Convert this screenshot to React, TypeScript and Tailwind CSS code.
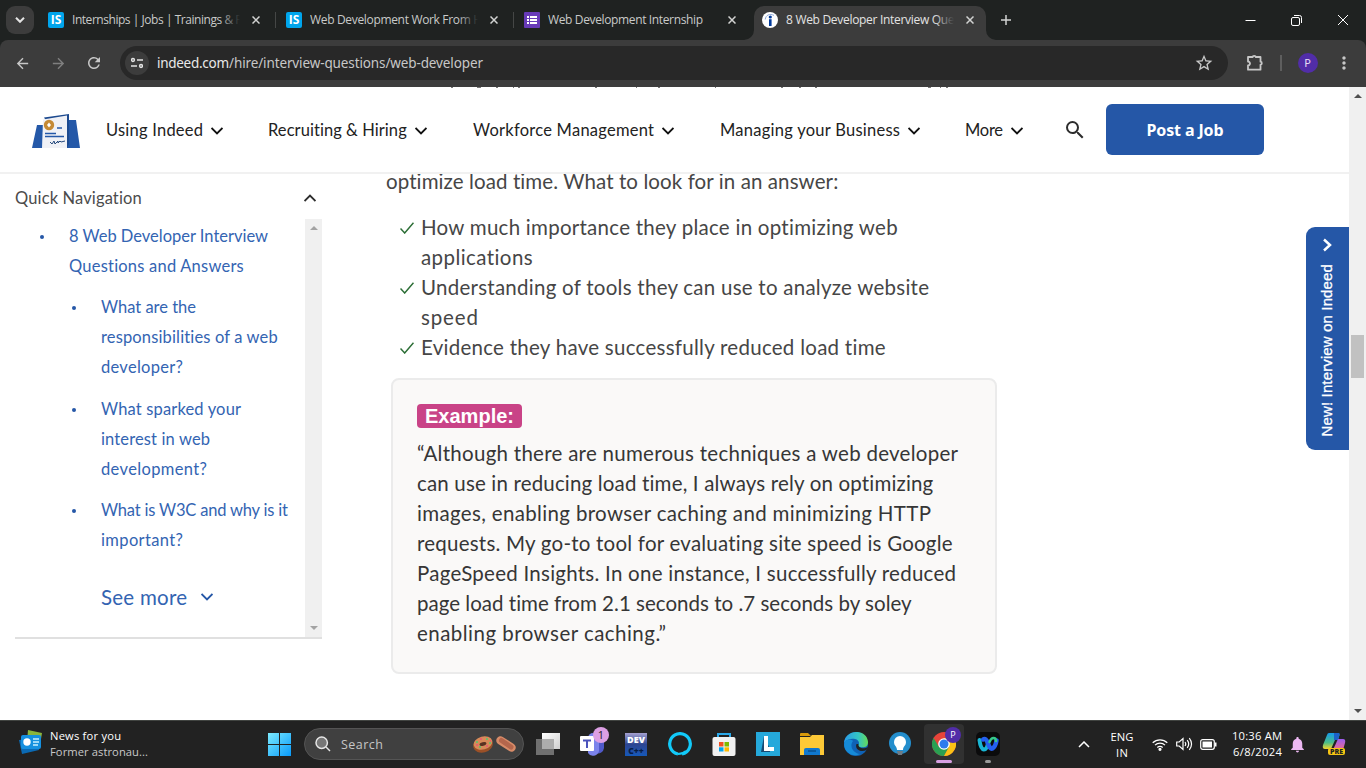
import React, { useLayoutEffect, useRef, useState } from "react";
import {
  MdArrowBack,
  MdArrowForward,
  MdRefresh,
  MdStarBorder,
  MdMoreVert,
  MdSearch,
  MdNotifications,
} from "react-icons/md";

/* Single line of text tracked so that it fills the given width. */
function Fit({ w, children, className = "" }: { w: number; children: string; className?: string }) {
  const ref = useRef<HTMLSpanElement>(null);
  const [spacing, setSpacing] = useState(0);
  useLayoutEffect(() => {
    if (ref.current) {
      const natural = ref.current.getBoundingClientRect().width;
      setSpacing((w - natural) / Math.max(1, children.length - 1));
    }
  }, []);
  return (
    <span className={`block shrink-0 whitespace-nowrap ${className}`} style={{ width: w }}>
      <span ref={ref} style={{ letterSpacing: spacing }}>
        {children}
      </span>
    </span>
  );
}

function Chevron({ up = false, className = "" }: { up?: boolean; className?: string }) {
  return (
    <svg viewBox="0 0 12 8" className={`h-2 w-3 shrink-0 ${className}`} fill="none" stroke="currentColor" strokeWidth="1.9">
      <path d={up ? "M.5 7 6 1.5l5.5 5.5" : "M.5 1l5.5 5.5L11.5 1"} />
    </svg>
  );
}

function Cross({ className = "" }: { className?: string }) {
  return (
    <svg viewBox="0 0 8 8" className={`size-2 shrink-0 ${className}`} stroke="#d2d3d2" strokeWidth="1.5">
      <path d="M.5.5l7 7M7.5.5l-7 7" />
    </svg>
  );
}

function IsLogo() {
  return (
    <span className="flex size-4 shrink-0 items-center justify-center rounded-[2px] bg-[#00a5ec] font-['Open_Sans',sans-serif] text-[12px] leading-none font-bold text-white">
      IS
    </span>
  );
}

function Tab({ icon, title, w, fade }: { icon: React.ReactNode; title: string; w: number; fade: boolean }) {
  return (
    <div className="flex h-full w-[238px] items-center pl-2">
      {icon}
      <div className="relative ml-2 w-[168px] overflow-hidden">
        <Fit w={w}>{title}</Fit>
        {fade && <div className="absolute inset-y-0 right-0 w-5 bg-linear-to-r from-transparent to-[#1f2221]" />}
      </div>
      <Cross className="ml-3" />
    </div>
  );
}

function TabStrip() {
  return (
    <div className="flex h-10 shrink-0 bg-[#1f2221] font-['Open_Sans',sans-serif] text-[12px] text-[#c9cac9]">
      <div className="mt-1.5 ml-1.5 flex size-7 items-center justify-center rounded-[9px] bg-[#3c3c3c]">
        <svg viewBox="0 0 10 6" className="h-1.5 w-2.5" fill="none" stroke="#e3e3e3" strokeWidth="2">
          <path d="M1 .8l4 4 4-4" />
        </svg>
      </div>
      <div className="ml-1.5 flex">
        <Tab icon={<IsLogo />} title="Internships | Jobs | Trainings & Fr" w={174} fade />
        <div className="-ml-[3px] mr-0.5 mt-3 h-4 w-px bg-[#454746]" />
        <Tab icon={<IsLogo />} title="Web Development Work From Ho" w={179} fade />
        <div className="-ml-[3px] mr-0.5 mt-3 h-4 w-px bg-[#454746]" />
        <Tab
          icon={
            <svg viewBox="0 0 16 16" className="size-4 shrink-0">
              <rect width="16" height="16" rx="1" fill="#673ab7" />
              <path d="M3 4h2v2H3zM6 4h7v2H6zM3 7h2v2H3zM6 7h7v2H6zM3 10h2v2H3zM6 10h7v2H6z" fill="#fff" />
            </svg>
          }
          title="Web Development Internship"
          w={155}
          fade={false}
        />
      </div>
      <div className="relative mt-1.5 flex h-[34px] w-[232px] items-center rounded-t-[10px] bg-[#3c3c3c] pb-1.5 pl-2 text-[#e3e3e3]">
        <svg viewBox="0 0 10 10" className="absolute bottom-0 -left-2.5 size-2.5">
          <path d="M10 0v10H0A10 10 0 0 0 10 0" fill="#3c3c3c" />
        </svg>
        <svg viewBox="0 0 10 10" className="absolute -right-2.5 bottom-0 size-2.5">
          <path d="M0 0v10h10A10 10 0 0 1 0 0" fill="#3c3c3c" />
        </svg>
        <svg viewBox="0 0 16 16" className="size-4 shrink-0">
          <circle cx="8" cy="8" r="8" fill="#fff" />
          <circle cx="8.3" cy="5" r="1.6" fill="#003a9b" />
          <path d="M7 7.2h2.6V14H7z" fill="#003a9b" />
          <path d="M3.2 7.5C3.8 3 7.6 1.2 12 3.4" fill="none" stroke="#8fa8d8" strokeWidth="1" />
        </svg>
        <div className="relative ml-2 w-[168px] overflow-hidden">
          <Fit w={174}>8 Web Developer Interview Ques</Fit>
          <div className="absolute inset-y-0 right-0 w-5 bg-linear-to-r from-transparent to-[#3c3c3c]" />
        </div>
        <Cross className="ml-3" />
      </div>
      <svg viewBox="0 0 10 10" className="mt-[15px] ml-[15px] size-2.5" stroke="#d2d3d2" strokeWidth="1.5">
        <path d="M5 0v10M0 5h10" />
      </svg>
      <div className="ml-auto flex items-center gap-[35px] pr-[17px] text-white">
        <svg viewBox="0 0 11 11" className="size-[11px]" stroke="currentColor">
          <path d="M.5 5.5h10" />
        </svg>
        <svg viewBox="0 0 11 11" className="size-[11px]" fill="none" stroke="currentColor">
          <rect x=".5" y="2.5" width="8" height="8" rx="1.5" />
          <path d="M3 .5h5.5a2 2 0 0 1 2 2V8" />
        </svg>
        <svg viewBox="0 0 12 12" className="size-3" stroke="currentColor">
          <path d="M1 1l10 10M11 1 1 11" />
        </svg>
      </div>
    </div>
  );
}

function Toolbar() {
  return (
    <div className="h-[47px] shrink-0 bg-[#1f2221]">
      <div className="flex h-full items-center rounded-t-lg bg-[#3c3c3c] pb-px text-[#c7c7c7]">
        <MdArrowBack className="ml-3.5 size-[17px]" />
        <MdArrowForward className="ml-[19px] size-[17px] text-[#7f7f7f]" />
        <MdRefresh className="ml-[18px] size-[18px]" />
        <div className="ml-[17px] flex h-[34px] w-[1108px] items-center rounded-full bg-[#282828] pl-[5px]">
          <div className="flex size-6 items-center justify-center rounded-full bg-[#3c3c3c]">
            <svg viewBox="0 0 12 12" className="size-3" fill="none" stroke="#e3e3e3" strokeWidth="1.5">
              <circle cx="2" cy="3" r="1.4" />
              <path d="M6 3h6M0 9h6" />
              <circle cx="10" cy="9" r="1.4" />
            </svg>
          </div>
          <div className="ml-2 flex font-['Noto_Sans',sans-serif] text-[13.5px] leading-5">
            <Fit w={72} className="text-[#e8e8e8]">indeed.com</Fit>
            <Fit w={254}>/hire/interview-questions/web-developer</Fit>
          </div>
          <MdStarBorder className="ml-auto mr-3.5 size-5" />
        </div>
        <svg viewBox="0 0 18 18" className="ml-[18px] size-[18px]" fill="none" stroke="currentColor" strokeWidth="1.8" strokeLinejoin="round">
          <path d="M2 3h4.700a1.500 1.200 0 0 1 3 0h4.800v4.700a1.300 1.500 0 0 1 0 3v5H2v-4.200a2 2 0 0 0 0-4z" />
        </svg>
        <div className="ml-4 h-4 w-[1.5px] bg-[#5e5e5e]" />
        <div className="ml-4 flex size-5 items-center justify-center rounded-full bg-[#512da8] font-['Noto_Sans',sans-serif] text-[11px] text-[#e6def5]">
          P
        </div>
        <MdMoreVert className="ml-4 size-5" />
      </div>
    </div>
  );
}

const NAV: { label: string; w: number; gap: string }[] = [
  { label: "Using Indeed", w: 97, gap: "ml-[26px]" },
  { label: "Recruiting & Hiring", w: 139, gap: "ml-[45px]" },
  { label: "Workforce Management", w: 181, gap: "ml-[46px]" },
  { label: "Managing your Business", w: 180, gap: "ml-[46px]" },
  { label: "More", w: 38, gap: "ml-[45px] mr-px" },
];

function Header() {
  return (
    <header className="relative flex h-[87px] shrink-0 items-center border-b-2 border-[#f1f1f1] bg-white pl-8">
      <svg viewBox="0 0 515 1" className="absolute top-0 left-[440px] h-px w-[515px]" fill="#777">
        <path d="M11 0h2v1h-2zM37 0h4v1h-4zM56 0h2v1h-2zM73 0h1v1h-1zM78 0h2v1h-2zM155 0h2v1h-2zM196 0h1v1h-1zM218 0h2v1h-2zM275 0h1v1h-1zM341 0h2v1h-2zM359 0h2v1h-2zM375 0h2v1h-2zM488 0h3v1h-3zM500 0h1v1h-1zM506 0h2v1h-2z" />
      </svg>
      <svg viewBox="0 0 48 35" className="mt-[3px] h-[35px] w-12">
        <path d="M5 11h12v23H0zM34 6h10l4 28H32z" fill="#2458a8" />
        <path d="M12 3.500 37 0v30l-2 4h-4z" fill="#1d4a8f" />
        <path d="M11 5.500l24-4V34H10z" fill="#f0f1f6" />
        <circle cx="17" cy="11" r="5.2" fill="#c58a35" />
        <path d="M17 8.500 19 11l-2 2.500L15 11z" fill="#fff" />
        <path d="M25 14h5M13 19.500h11M13 22.500h19" stroke="#2458a8" strokeWidth="1.4" />
        <path d="M18 28l2 2 2-3 1 3 3-3 0 2 2-2 1 1 4-1" fill="none" stroke="#264a7d" />
      </svg>
      {NAV.map((n) => (
        <div key={n.label} className={`flex items-center text-[#222] ${n.gap}`}>
          <Fit w={n.w} className="text-[16.5px] leading-6">{n.label}</Fit>
          <Chevron className="mt-0.5 ml-2 text-[#111]" />
        </div>
      ))}
      <MdSearch className="ml-[39px] size-6 text-[#2d2d2d]" />
      <button className="ml-[19px] flex h-[51px] w-[158px] items-center justify-center rounded-md bg-[#2557a7] font-['Noto_Sans',sans-serif] text-[16px] font-bold text-white">
        <Fit w={77}>Post a Job</Fit>
      </button>
    </header>
  );
}

const LINKS: { gap: string; lines: [string, number][] }[] = [
  { gap: "mt-[11px]", lines: [["What are the", 95], ["responsibilities of a web", 177], ["developer?", 82]] },
  { gap: "mt-3", lines: [["What sparked your", 140], ["interest in web", 109], ["development?", 106]] },
  { gap: "mt-[11px]", lines: [["What is W3C and why is it", 187], ["important?", 82]] },
];

function Lines({ lines }: { lines: [string, number][] }) {
  return (
    <div>
      {lines.map(([t, w]) => (
        <Fit key={t} w={w}>{t}</Fit>
      ))}
    </div>
  );
}

function Dot() {
  return <span className="mt-3.5 size-1 shrink-0 rounded-full bg-[#2557a7]" />;
}

function Triangle({ up = false, className = "" }: { up?: boolean; className?: string }) {
  return (
    <svg viewBox="0 0 8 4" className={`h-1 w-2 ${className}`} fill="currentColor">
      <path d={up ? "M0 4 4 0l4 4z" : "M0 0l4 4 4-4z"} />
    </svg>
  );
}

function Sidebar() {
  return (
    <aside className="ml-[15px] w-[307px] shrink-0 pt-[9px]">
      <div className="flex h-9 items-center justify-between pb-1.5 text-[16.5px] text-[#4c4c4c]">
        <Fit w={127}>Quick Navigation</Fit>
        <Chevron up className="mr-1.5 text-[#2d2d2d]" />
      </div>
      <div className="flex h-[420px] border-b-2 border-[#e0e0e0]">
        <div className="w-[290px] pt-[2px] text-[16.5px] leading-[30px] text-[#3364b2]">
          <div className="flex gap-[25px] pl-[25px]">
            <Dot />
            <Lines lines={[["8 Web Developer Interview", 199], ["Questions and Answers", 175]]} />
          </div>
          {LINKS.map((l, i) => (
            <div key={i} className={`flex gap-[25px] pl-[57px] ${l.gap}`}>
              <Dot />
              <Lines lines={l.lines} />
            </div>
          ))}
          <div className="mt-[27px] flex items-center pl-[86px] text-[20.5px]">
            <Fit w={86}>See more</Fit>
            <Chevron className="ml-3.5 text-[#2557a7]" />
          </div>
        </div>
        <div className="flex w-[17px] flex-col items-center justify-between bg-[#f0f0f0] py-[7px] text-[#a3a3a3]">
          <Triangle up />
          <Triangle />
        </div>
      </div>
    </aside>
  );
}

const POINTS: [string, number][][] = [
  [["How much importance they place in optimizing web", 477], ["applications", 112]],
  [["Understanding of tools they can use to analyze website", 508], ["speed", 57]],
  [["Evidence they have successfully reduced load time", 465]],
];

const EXAMPLE: [string, number][] = [
  ["“Although there are numerous techniques a web developer", 541],
  ["can use in reducing load time, I always rely on optimizing", 517],
  ["images, enabling browser caching and minimizing HTTP", 514],
  ["requests. My go-to tool for evaluating site speed is Google", 536],
  ["PageSpeed Insights. In one instance, I successfully reduced", 539],
  ["page load time from 2.1 seconds to .7 seconds by soley", 495],
  ["enabling browser caching.”", 249],
];

function Article() {
  return (
    <main className="ml-16 w-[620px] text-[20.5px] leading-[30px] text-[#464646]">
      <div className="-mt-2">
        <Fit w={453}>optimize load time. What to look for in an answer:</Fit>
      </div>
      <ul className="mt-4 ml-[14px]">
        {POINTS.map((p, i) => (
          <li key={i} className="flex">
            <svg viewBox="0 0 14 12" className="mt-2.5 mr-[7px] h-3 w-3.5 shrink-0" fill="none" stroke="#2c6e36" strokeWidth="1.5">
              <path d="M.5 6.5 4.7 11 13.5.8" />
            </svg>
            <Lines lines={p} />
          </li>
        ))}
      </ul>
      <section className="mt-4 ml-[5px] h-[296px] w-[606px] rounded-lg border-2 border-[#ebebeb] bg-[#faf9f8] pt-6 pl-6">
        <div className="flex h-6 w-[105px] items-center justify-center rounded bg-[#c94387] font-['Liberation_Sans',Arial,sans-serif] text-[20px] font-bold text-white">
          <Fit w={89}>Example:</Fit>
        </div>
        <div className="mt-2.5 text-[#363636]">
          <Lines lines={EXAMPLE} />
        </div>
      </section>
    </main>
  );
}

function Page() {
  return (
    <div className="flex h-[633px] shrink-0 bg-white">
      <div className="relative flex w-[1349px] flex-col overflow-hidden font-['Lato','Noto_Sans',sans-serif]">
        <div className="relative z-10 flex flex-col">
          <Header />
        </div>
        <div className="flex">
          <Sidebar />
          <Article />
        </div>
        <div className="absolute top-[140px] right-0 flex h-[223px] w-[43px] flex-col items-center rounded-l-[9px] bg-[#2557a7] pt-[11px] text-white">
          <svg viewBox="0 0 10 14" className="-ml-px h-3.5 w-2.5" fill="none" stroke="currentColor" strokeWidth="2.5">
            <path d="M2 1.5 8 7l-6 5.5" />
          </svg>
          <span className="mt-3 -ml-0.5 rotate-180 font-['Liberation_Sans',Arial,sans-serif] text-[15px] leading-5 font-normal tracking-[.13px] whitespace-nowrap [-webkit-text-stroke:.3px_white] [writing-mode:vertical-rl]">
            New! Interview on Indeed
          </span>
        </div>
      </div>
      <div className="flex w-[17px] flex-col items-center bg-[#f0f0f0] text-[#505050]">
        <Triangle up className="mt-[7px]" />
        <div className="mt-[237px] h-[43px] w-[13px] bg-[#c1c1c1]" />
        <Triangle className="mt-auto mb-[7px]" />
      </div>
    </div>
  );
}

function TaskIcons() {
  return (
    <div className="ml-3 flex items-center text-white">
      <svg viewBox="0 0 24 24" className="size-6">
        <defs>
          <linearGradient id="tv" x2="1" y2="1"><stop stopColor="#fff" /><stop offset="1" stopColor="#cfcfcf" /></linearGradient>
        </defs>
        <path d="M6 1h18v16H6z" fill="url(#tv)" />
        <path d="M0 7h18v16H0z" fill="#707070" />
        <path d="M6 7h12v10H6z" fill="#adadad" />
      </svg>
      <div className="relative ml-5 size-6">
        <svg viewBox="0 0 24 24" className="size-6">
          <circle cx="13" cy="6" r="5" fill="#7b83eb" />
          <path d="M16 8h8v8a6 6 0 0 1-8 5z" fill="#5059c9" />
          <path d="M8 9h11v8a6 6 0 0 1-11 4z" fill="#7b83eb" />
          <rect y="4" width="14" height="15" rx="1" fill="#fff" />
          <path d="M3 7.5h8v2H8V16H6V9.500H3z" fill="#4b53bc" />
        </svg>
        <span className="absolute -top-[5px] left-[13px] flex size-4 items-center justify-center rounded-full bg-[#dd9fe4] text-[11px] text-[#222]">1</span>
      </div>
      <div className="ml-[21px] flex h-[23px] w-[22px] flex-col overflow-hidden bg-linear-to-b from-[#a5a0cf] via-[#2c4592] to-[#1259ba] pt-px text-center font-extrabold">
        <span className="h-[12px] text-[9px] leading-[12px] text-white">DEV</span>
        <span className="h-[10px] text-[8.5px] leading-[10px] text-[#061d45]">C++</span>
      </div>
      <svg viewBox="0 0 24 24" className="ml-[21px] size-6" fill="none" stroke="#12caf9" strokeWidth="3.2">
        <path d="M10 22A10.300 10.300 0 1 1 14 22" />
        <path d="M10 22c4 0 6-1 8-3" strokeWidth="2" />
      </svg>
      <svg viewBox="0 0 24 24" className="ml-5 size-6">
        <path d="M6 8V2h12v6" fill="none" stroke="#2ba9ea" strokeWidth="2" />
        <rect x=".5" y="5" width="23" height="19" rx="2" fill="#f1f1f1" />
        <path d="M7 10h4.500v4.500H7z" fill="#f25022" />
        <path d="M12.500 10H17v4.500h-4.500z" fill="#7fba00" />
        <path d="M7 15.300h4.500V19.500H7z" fill="#00a4ef" />
        <path d="M12.500 15.300H17V19.500h-4.500z" fill="#ffb900" />
      </svg>
      <svg viewBox="0 0 24 24" className="ml-5 size-6">
        <path d="M0 0h24v24H0z" fill="#25a9db" />
        <path d="M8 4 5 20l9 0 0-3z" fill="#174b74" />
        <path d="M8 4h4v11h6v4H8z" fill="#fff" />
      </svg>
      <svg viewBox="0 0 24 24" className="ml-5 size-6">
        <path d="M0 2q0-1 1-1h7l3 3H0z" fill="#d99a0a" />
        <path d="M0 5h10l2-2h12v20H0z" fill="#fdc937" />
        <path d="M4 23v-5q0-2 2-2h12q2 0 2 2v5z" fill="#1078cf" />
        <path d="M8 19h8" stroke="#08508f" strokeWidth="1.5" />
      </svg>
      <svg viewBox="0 0 24 24" className="ml-5 size-6">
        <defs>
          <linearGradient id="eg" x2="1"><stop stopColor="#2a9be8" /><stop offset=".6" stopColor="#34c5c3" /><stop offset="1" stopColor="#65dc58" /></linearGradient>
        </defs>
        <circle cx="12" cy="12" r="12" fill="#0f62b5" />
        <path d="M0 11C1-3 23-4 24 10c0 5-4 6-8 5-3-1-1-2-1-4 0-5-11-6-15 0z" fill="url(#eg)" />
        <path d="M9 9c-4 5 0 12 7 13-9 5-19-5-15-13 3-2 6-2 8 0z" fill="#168bd8" />
        <path d="M14.500 12c-1 3 4 6 9.500 3l-1.500 3c-6 3-12-1-10-6z" fill="#222" />
      </svg>
      <svg viewBox="0 0 24 24" className="ml-5 size-6">
        <circle cx="12" cy="11" r="11" fill="#238dcc" />
        <path d="M12 4a6 6 0 0 1 6 6c0 4-3 4-3 8H9c0-4-3-4-3-8a6 6 0 0 1 6-6z" fill="#fff" />
        <path d="M9 19h6l-1 4h-4z" fill="#6f7b85" />
      </svg>
      <div className="relative ml-3 flex h-10 w-10 items-center justify-center rounded bg-[#313131]">
        <svg viewBox="0 0 24 24" className="size-6">
          <circle cx="12" cy="12" r="12" fill="#e6443a" />
          <path d="M1.600 6A12 12 0 0 0 12 24l5-9H7z" fill="#2aa052" />
          <path d="M12 24A12 12 0 0 0 22.400 6H12l5 9z" fill="#fbc116" />
          <circle cx="12" cy="12" r="5.800" fill="#fff" />
          <circle cx="12" cy="12" r="4.500" fill="#2e7bed" />
        </svg>
        <span className="absolute top-[3px] left-[21px] flex size-4 items-center justify-center rounded-full bg-[#512da8] text-[9px]">P</span>
        <span className="absolute bottom-px left-3 h-[3px] w-4 rounded-full bg-[#d9a0e3]" />
      </div>
      <div className="relative ml-3 size-6 rounded-[5px] bg-[#0b0b0c]">
        <svg viewBox="0 0 24 24" className="size-6" fill="none" strokeLinecap="round">
          <path d="M3.500 8q1 9 4.500 9.500 3 0 4-6.500" stroke="#18b6d4" strokeWidth="4" />
          <path d="M7 7.500q3-2 5 4t4.500 5q3-2 4-8" stroke="#2460f0" strokeWidth="4.500" />
          <path d="M13.500 10q1.500-4 4-4t2.500 3" stroke="#35c98b" strokeWidth="2.500" />
        </svg>
        <span className="absolute -bottom-[7px] left-[9px] h-[3px] w-1.5 rounded-full bg-[#9a9a9a]" />
      </div>
    </div>
  );
}

function Taskbar() {
  return (
    <div className="flex h-12 shrink-0 items-center border-t border-[#414441] bg-[#222] pb-px font-['Open_Sans',sans-serif] text-[11.2px] leading-4 text-white">
      <svg viewBox="0 0 24 24" className="-mt-1 ml-[19px] size-6 shrink-0">
        <path d="M9 0l14 3-2 12L8 12z" fill="#8ab53c" />
        <path d="M0 10l3 14 17-4-2-12z" fill="#0b6ab4" />
        <rect x="2" y="5" width="20" height="14" rx="2" fill="#1590df" />
        <circle cx="8" cy="12" r="3.7" fill="#fff" />
        <path d="M14 9h6M14 12h6M14 15h5" stroke="#c9efff" strokeWidth="1.3" />
      </svg>
      <div className="ml-[7px] w-[100px]">
        <Fit w={71}>News for you</Fit>
        <Fit w={98} className="text-[#c9c9c9]">Former astronau...</Fit>
      </div>
      <svg viewBox="0 0 23 23" className="ml-[118px] size-[23px] shrink-0">
        <defs>
          <linearGradient id="wg" x2="1" y2="1"><stop stopColor="#7ceafe" /><stop offset="1" stopColor="#089afa" /></linearGradient>
        </defs>
        <path d="M0 0h11v11H0zM12 0h11v11H12zM0 12h11v11H0zM12 12h11v11H12z" fill="url(#wg)" />
      </svg>
      <div className="ml-[13px] flex h-8 w-[220px] shrink-0 items-center rounded-full border border-[#545454] bg-[#404040] pl-2.5 text-[12.5px] text-[#c6c6c6]">
        <svg viewBox="0 0 16 16" className="size-4" fill="#777" stroke="#e7e7e7" strokeWidth="1.5">
          <circle cx="6.7" cy="6.7" r="5.7" />
          <path d="M11 11l4 4" />
        </svg>
        <Fit w={42} className="mt-0.5 ml-2.5">Search</Fit>
        <svg viewBox="0 0 46 18" className="ml-auto mr-[5px] h-[18px] w-[46px]">
          <ellipse cx="11" cy="10" rx="10" ry="7.5" fill="#9b5027" transform="rotate(-15 11 10)" />
          <ellipse cx="11" cy="8" rx="9.5" ry="6.5" fill="#d78a59" transform="rotate(-15 11 8)" />
          <ellipse cx="11" cy="9" rx="3.5" ry="1.8" fill="#593222" transform="rotate(-15 11 9)" />
          <path d="M4 7h2M14 4h2M17 8h2M7 12h2" stroke="#53c66b" strokeWidth="1.3" />
          <path d="M8 4h2M4 10h2M14 11h2M18 6h1" stroke="#eb5575" strokeWidth="1.3" />
          <path d="M28.500 5.500 39.500 12.500" stroke="#d78b68" strokeWidth="8.5" strokeLinecap="round" />
          <path d="M29.500 5.500 39 12" stroke="#b4664c" strokeWidth="5" strokeLinecap="round" />
        </svg>
      </div>
      <TaskIcons />
      <svg viewBox="0 0 12 7" className="ml-auto h-[7px] w-3" fill="none" stroke="#fff" strokeWidth="1.5">
        <path d="M1 6l5-5 5 5" />
      </svg>
      <div className="mt-0.5 ml-5 flex w-6 flex-col items-center">
        <Fit w={23}>ENG</Fit>
        <Fit w={12}>IN</Fit>
      </div>
      <svg viewBox="0 0 16 13" className="ml-[18px] h-[13px] w-4" fill="none" stroke="#fff" strokeWidth="1.2">
        <path d="M.7 4.800a10.500 10.500 0 0 1 14.600 0M3 7.200a7 7 0 0 1 10 0M5.300 9.500a4 4 0 0 1 5.400 0" />
        <circle cx="8" cy="11.3" r="1" fill="#fff" />
      </svg>
      <svg viewBox="0 0 17 14" className="ml-2 h-3.5 w-[17px]" fill="none" stroke="#fff" strokeWidth="1.2">
        <path d="M.7 5v4h2.500L7 12.500v-11L3.200 5zM9 5q1.500 2 0 4M11.200 3.200q3 3.800 0 7.600M13.300 1.200q4.500 5.800 0 11.600" />
      </svg>
      <svg viewBox="0 0 17 11" className="ml-[7px] h-[11px] w-[17px]">
        <rect x=".7" y=".7" width="13.6" height="9.6" rx="2" fill="none" stroke="#fff" strokeWidth="1.2" />
        <path d="M2.500 2.500h9.500v6H2.500zM15 3.500h1.500v4H15z" fill="#fff" />
      </svg>
      <div className="ml-3.5 flex w-[51px] flex-col items-end">
        <Fit w={50}>10:36 AM</Fit>
        <Fit w={49}>6/8/2024</Fit>
      </div>
      <MdNotifications className="ml-1.5 size-[19px] text-[#edb8f3]" />
      <div className="relative mr-5 ml-[15px] size-6">
        <svg viewBox="0 0 24 24" className="size-6">
          <defs>
            <linearGradient id="ca" y2="1" x2="0"><stop stopColor="#159bec" /><stop offset=".6" stopColor="#4bbd87" /><stop offset="1" stopColor="#f5d42b" /></linearGradient>
            <linearGradient id="cb" y2="1" x2="0"><stop stopColor="#9b5cf0" /><stop offset="1" stopColor="#f06d8a" /></linearGradient>
          </defs>
          <path d="M7 1h9q2 0 1.500 2L16 8h-3L9 17H3q-3 0-2-4L5 3q.5-2 2-2z" fill="url(#ca)" />
          <path d="M12 1h4q2 0 1.500 2L16 8h-4z" fill="#1d61c9" />
          <path d="M16 7h5q3 0 2 4l-2 7H11l4-9z" fill="url(#cb)" />
        </svg>
        <span className="absolute top-4 left-[6px] rounded-[2px] bg-[#f7c513] px-[2px] text-[7px] leading-[7px] font-extrabold text-[#222]">PRE</span>
      </div>
    </div>
  );
}

export default function App() {
  return (
    <div className="flex h-[768px] w-[1366px] flex-col overflow-hidden">
      <TabStrip />
      <Toolbar />
      <Page />
      <Taskbar />
    </div>
  );
}
